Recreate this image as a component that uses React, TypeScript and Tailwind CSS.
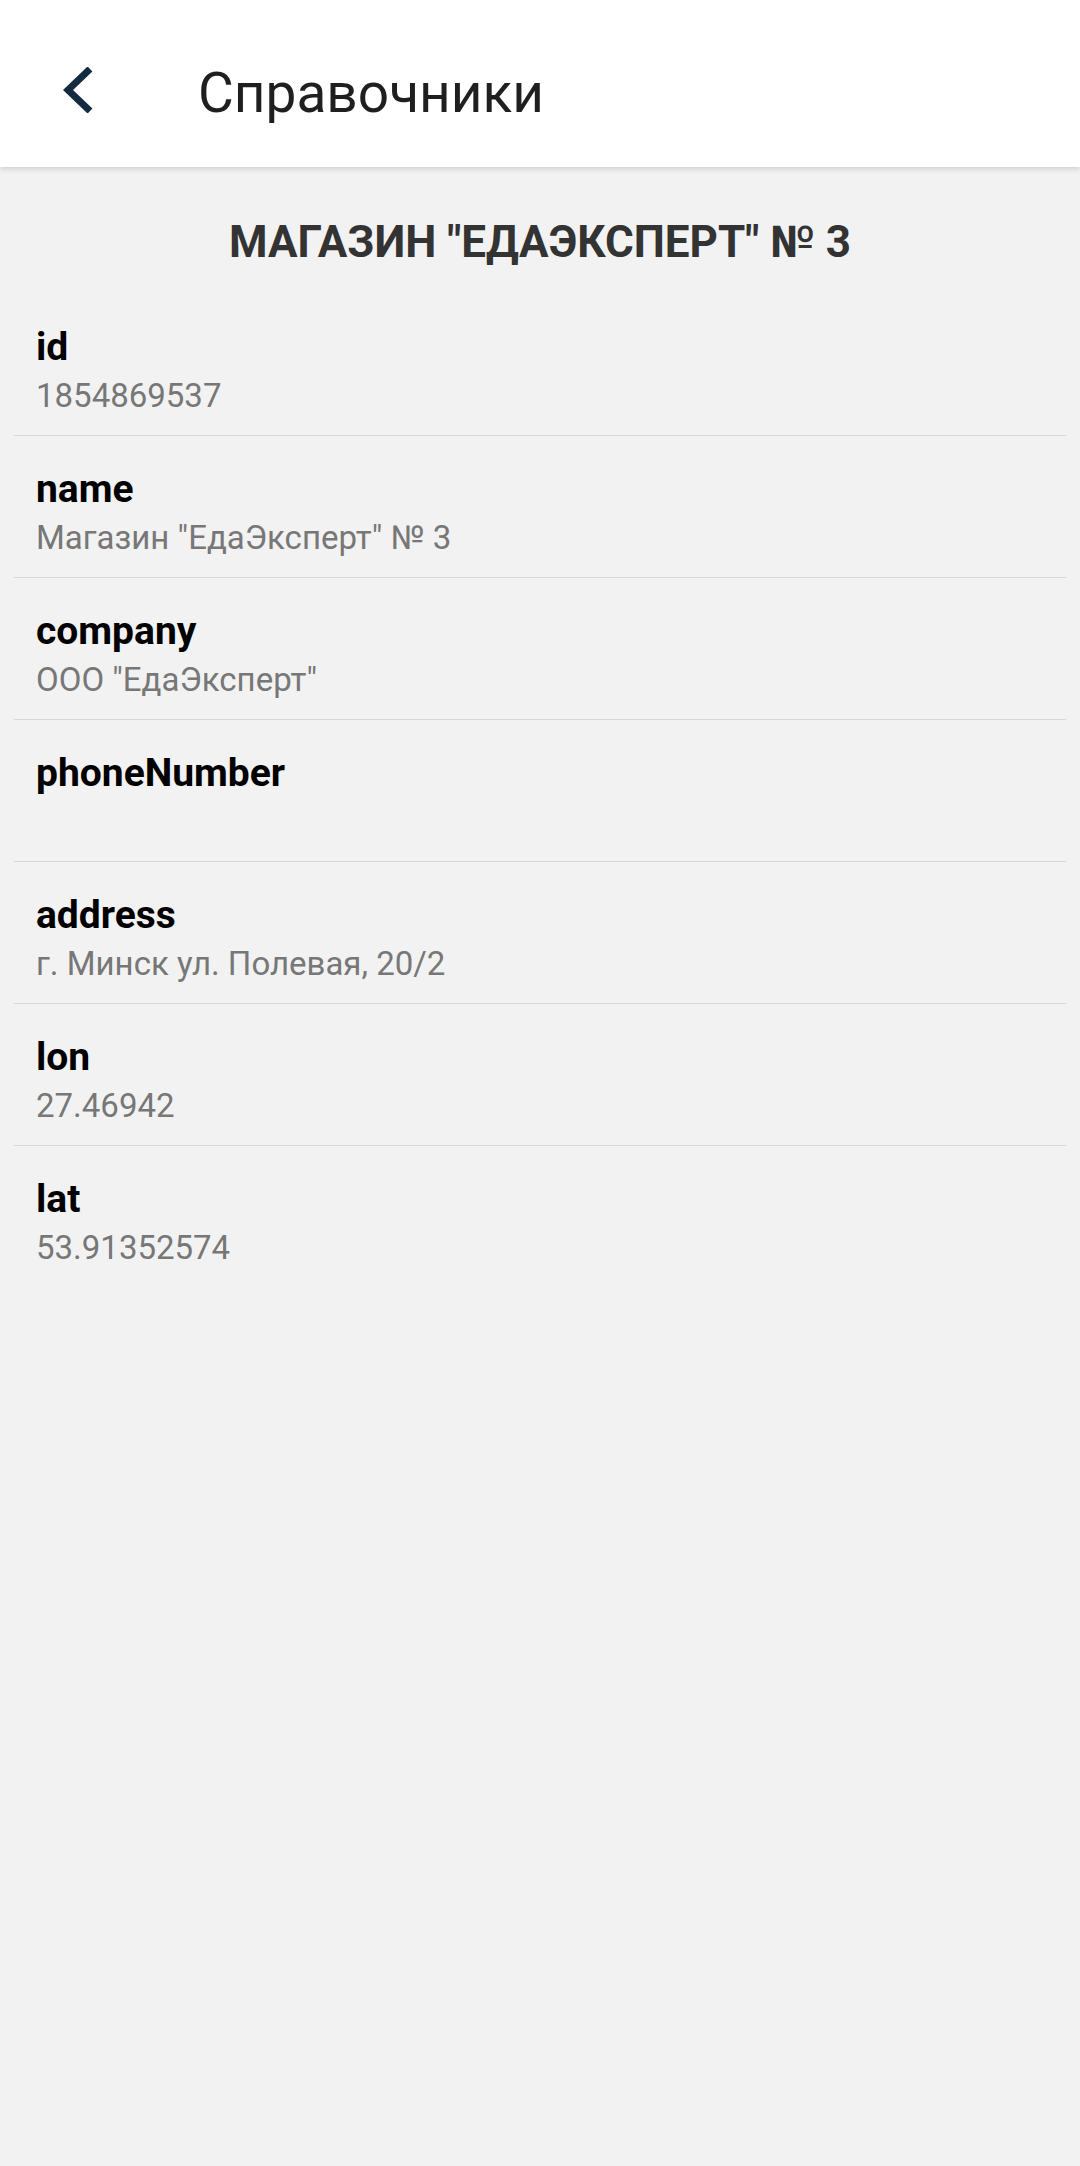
import React from 'react';

// Store record fields, shown in order
const FIELDS = [
    { label: "id", value: "1854869537" },
    { label: "name", value: 'Магазин "ЕдаЭксперт" № 3' },
    { label: "company", value: 'ООО "ЕдаЭксперт"' },
    { label: "phoneNumber", value: "" },
    { label: "address", value: "г. Минск ул. Полевая, 20/2" },
    { label: "lon", value: "27.46942" },
    { label: "lat", value: "53.91352574" },
];

function BackIcon() {
    return (
        <svg width="30" height="46" viewBox="0 0 30 46" fill="none" className="mt-[67px] shrink-0">
            <polyline
                points="27,2 5,23 27,44"
                stroke="#132a40"
                strokeWidth="7"
                strokeLinecap="butt"
                strokeLinejoin="miter"
            />
        </svg>
    );
}

function FieldRow({ label, value, last }: { label: string; value: string; last: boolean }) {
    return (
        <div className={`pl-[22px] pt-[30px] pb-[19px] ${last ? "" : "border-b border-[#d6d6d6]"}`}>
            <div className="text-[39px] leading-[46px] font-bold text-black">{label}</div>
            <div className="mt-[6px] text-[33px] leading-[40px] text-[#777777] h-[40px]">{value}</div>
        </div>
    );
}

export default function App() {
    return (
        <div className="min-h-[2166px] w-full bg-[#f2f2f2] font-['Roboto','Noto_Sans',sans-serif]">
            {/* Toolbar */}
            <div className="h-[167px] bg-white flex items-start pl-[63px] shadow-[0_2px_5px_rgba(0,0,0,0.15)] relative z-10">
                <BackIcon />
                <h1 className="ml-[105px] mt-[61px] text-[55px] leading-[64px] font-normal text-[#1f1f1f]">
                    Справочники
                </h1>
            </div>

            {/* Store title */}
            <h2 className="mt-[49px] text-center text-[44px] leading-[52px] font-bold text-[#333333]">
                МАГАЗИН "ЕДАЭКСПЕРТ" № 3
            </h2>

            {/* Field list */}
            <div className="mt-[26px] mx-[14px]">
                {FIELDS.map((f, i) => (
                    <FieldRow key={f.label} label={f.label} value={f.value} last={i === FIELDS.length - 1} />
                ))}
            </div>
        </div>
    );
}
